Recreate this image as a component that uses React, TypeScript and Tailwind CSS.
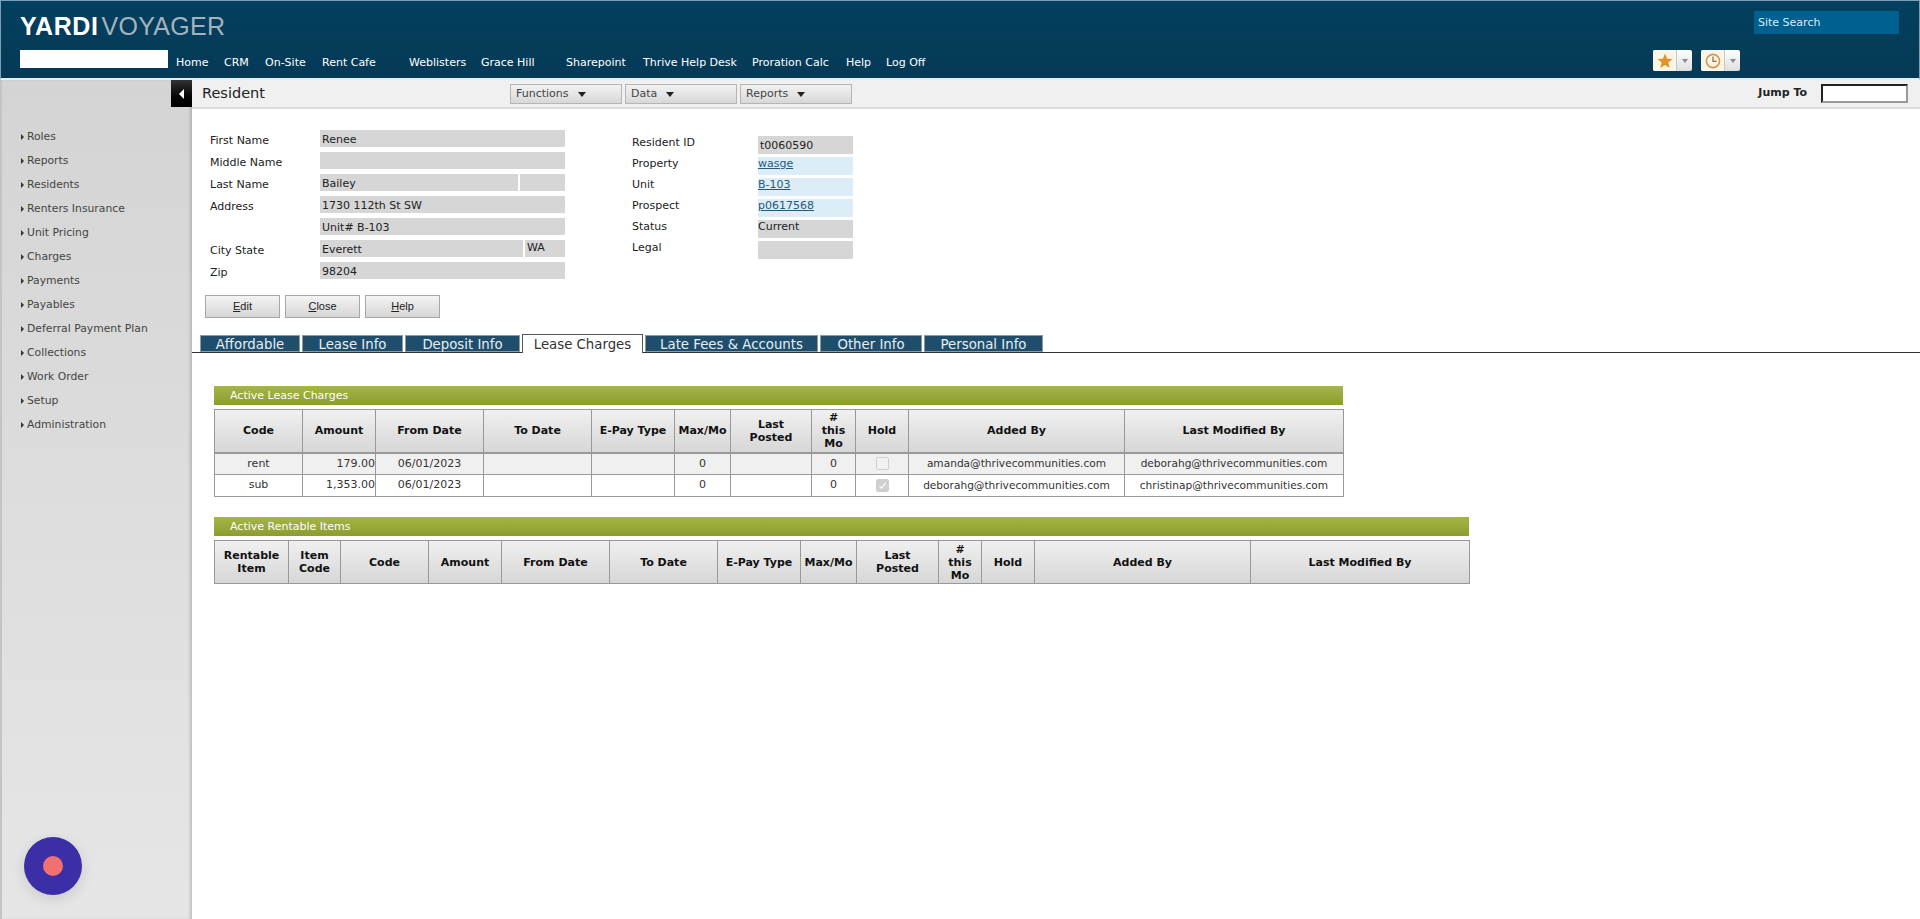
const navLinks = [
  { label: "Home", w: 48 },
  { label: "CRM", w: 41 },
  { label: "On-Site", w: 57 },
  { label: "Rent Cafe", w: 87 },
  { label: "Weblisters", w: 72 },
  { label: "Grace Hill", w: 85 },
  { label: "Sharepoint", w: 77 },
  { label: "Thrive Help Desk", w: 109 },
  { label: "Proration Calc", w: 94 },
  { label: "Help", w: 40 },
  { label: "Log Off", w: 60 },
];

const sideItems = [
  "Roles",
  "Reports",
  "Residents",
  "Renters Insurance",
  "Unit Pricing",
  "Charges",
  "Payments",
  "Payables",
  "Deferral Payment Plan",
  "Collections",
  "Work Order",
  "Setup",
  "Administration",
];

const tabs = [
  { label: "Affordable", w: 100 },
  { label: "Lease Info", w: 101 },
  { label: "Deposit Info", w: 115 },
  { label: "Lease Charges", w: 121, active: true },
  { label: "Late Fees & Accounts", w: 173 },
  { label: "Other Info", w: 102 },
  { label: "Personal Info", w: 119 },
];

const chargeCols = [
  { label: ["Code"], w: 88 },
  { label: ["Amount"], w: 73 },
  { label: ["From Date"], w: 108 },
  { label: ["To Date"], w: 108 },
  { label: ["E-Pay Type"], w: 83 },
  { label: ["Max/Mo"], w: 56 },
  { label: ["Last", "Posted"], w: 81 },
  { label: ["#", "this", "Mo"], w: 44 },
  { label: ["Hold"], w: 53 },
  { label: ["Added By"], w: 216 },
  { label: ["Last Modified By"], w: 219 },
];

const rentableCols = [
  { label: ["Rentable", "Item"], w: 74 },
  { label: ["Item", "Code"], w: 52 },
  { label: ["Code"], w: 88 },
  { label: ["Amount"], w: 73 },
  { label: ["From Date"], w: 108 },
  { label: ["To Date"], w: 108 },
  { label: ["E-Pay Type"], w: 83 },
  { label: ["Max/Mo"], w: 56 },
  { label: ["Last", "Posted"], w: 82 },
  { label: ["#", "this", "Mo"], w: 43 },
  { label: ["Hold"], w: 53 },
  { label: ["Added By"], w: 216 },
  { label: ["Last Modified By"], w: 219 },
];

const charges = [
  { code: "rent", amount: "179.00", from: "06/01/2023", hold: false, added: "amanda@thrivecommunities.com", modified: "deborahg@thrivecommunities.com", shade: true },
  { code: "sub", amount: "1,353.00", from: "06/01/2023", hold: true, added: "deborahg@thrivecommunities.com", modified: "christinap@thrivecommunities.com", shade: false },
];

function Field({ w, value, className = "leading-[19px]" }: { w: number; value?: string; className?: string }) {
  return (
    <div style={{ width: w }} className={`h-[17px] bg-[#d6d6d6] px-[2px] text-[11px] text-[#222] ${className}`}>
      {value}
    </div>
  );
}

function LeftRow({ label, children }: { label?: string; children: React.ReactNode }) {
  return (
    <div className="flex h-[22px]">
      <div className="w-[110px] pt-[2px] text-[11px] leading-[17px] text-[#222]">{label}</div>
      <div className="flex gap-[2px]">{children}</div>
    </div>
  );
}

function RightRow({ label, value, link, className = "leading-[13px]" }: { label: string; value?: string; link?: boolean; className?: string }) {
  return (
    <div className="flex h-[21px]">
      <div className="w-[126px] text-[11px] leading-[14px] text-[#222]">{label}</div>
      <div className={`h-[18px] w-[95px] text-[11px] ${className} ${link ? "bg-[#dcedf8] text-[#23597d] underline" : "bg-[#d6d6d6] text-[#222]"}`}>
        {value}
      </div>
    </div>
  );
}

function MenuButton({ label }: { label: string }) {
  return (
    <div className="flex h-[20px] w-[112px] items-center border border-[#b5b5b5] bg-gradient-to-b from-[#f2f2f2] to-[#d8d8d8] pl-[5px] pt-[1px] text-[11px] text-[#444]">
      {label}
      <span className="ml-[9px] h-0 w-0 border-x-[4px] border-t-[5px] border-x-transparent border-t-[#222]" />
    </div>
  );
}

function ActionButton({ first, rest }: { first: string; rest: string }) {
  return (
    <div className="flex h-[23px] w-[75px] items-center justify-center border border-[#a8a8a8] bg-gradient-to-b from-[#f4f4f4] to-[#d6d6d6] font-['Liberation_Sans',sans-serif] text-[11px] text-[#222]">
      <span className="underline">{first}</span>
      {rest}
    </div>
  );
}

function SectionBar({ title, w }: { title: string; w: number }) {
  return (
    <div
      style={{ width: w }}
      className="h-[19px] bg-gradient-to-b from-[#a6b644] to-[#8d9c30] pl-[16px] text-[11px] leading-[19px] text-white"
    >
      {title}
    </div>
  );
}

function HeaderCells({ cols }: { cols: { label: string[]; w: number }[] }) {
  return (
    <tr className="bg-gradient-to-b from-[#f0f0f0] to-[#d6d6d6]">
      {cols.map((c, i) => (
        <th key={i} className="border border-[#999] p-0 text-center text-[11px] font-bold leading-[13px] text-[#111]">
          {c.label.map((line) => (
            <div key={line}>{line}</div>
          ))}
        </th>
      ))}
    </tr>
  );
}

function Colgroup({ cols }: { cols: { w: number }[] }) {
  return (
    <colgroup>
      {cols.map((c, i) => (
        <col key={i} style={{ width: c.w }} />
      ))}
    </colgroup>
  );
}

function HoldBox({ checked }: { checked: boolean }) {
  return (
    <div className="mx-auto flex h-[13px] w-[13px] items-center justify-center rounded-[2px] border border-[#cfcfcf] bg-[#f2f2f2]">
      {checked && (
        <svg viewBox="0 0 12 12" className="h-[11px] w-[11px]">
          <rect x="0" y="0" width="12" height="12" fill="#cfcfcf" />
          <path d="M2.5 6.5 L5 9 L9.5 3" fill="none" stroke="#f5f5f5" strokeWidth="1.6" />
        </svg>
      )}
    </div>
  );
}

function SmallArrow() {
  return <span className="h-0 w-0 border-y-[3px] border-l-[3px] border-y-transparent border-l-[#333]" />;
}

function IconButton({ children }: { children: React.ReactNode }) {
  return (
    <div className="flex h-[21px] w-[39px] overflow-hidden rounded-[2px] bg-gradient-to-b from-[#ffffff] to-[#dfdfdf]">
      <div className="flex w-[24px] items-center justify-center border-r border-[#c8c8c8] bg-[#fbf5e6]">{children}</div>
      <div className="flex flex-1 items-center justify-center">
        <span className="h-0 w-0 border-x-[3px] border-t-[4px] border-x-transparent border-t-[#7f8c99]" />
      </div>
    </div>
  );
}

export default function App() {
  const tdClass = "border border-[#999] p-0 text-center text-[11px] text-[#333]";
  const emailClass = "border border-[#999] p-0 text-center text-[10.6px] text-[#333]";

  return (
    <div className="relative flex h-screen flex-col overflow-hidden bg-white font-['DejaVu_Sans',sans-serif]">
      {/* Top banner */}
      <div className="flex h-[80px] shrink-0 justify-between border border-b-2 border-[#7d9fb3] border-b-[#e8eef2] bg-gradient-to-b from-[#043f5f] to-[#053a56] px-[19px]">
        <div>
          <div className="mt-[12px] flex h-[26px] items-center font-['Liberation_Sans',sans-serif] text-[25px] leading-none">
            <span className="font-bold tracking-[0.6px] text-white">YARDI</span>
            <span className="ml-[3px] tracking-[0.3px] text-[#a3b3bd]">VOYAGER</span>
          </div>
          <div className="mt-[11px] flex items-start">
            <div className="h-[18px] w-[148px] bg-white" />
            <div className="ml-[8px] flex pt-[5px] text-[11px] text-white">
              {navLinks.map((n) => (
                <div key={n.label} style={{ width: n.w }}>
                  {n.label}
                </div>
              ))}
            </div>
          </div>
        </div>
        <div className="mr-[1px] flex w-[246px] flex-col items-end">
          <div className="mt-[10px] h-[23px] w-[145px] bg-[#00608f] pl-[4px] text-[11px] leading-[23px] text-[#d8ecf5]">
            Site Search
          </div>
          <div className="mt-[16px] mr-[159px] flex gap-[9px]">
            <IconButton>
              <svg viewBox="0 0 16 16" className="h-[16px] w-[16px]">
                <polygon points="8,0.5 10.1,5.7 15.6,6 11.3,9.5 12.8,15 8,11.9 3.2,15 4.7,9.5 0.4,6 5.9,5.7" fill="#e3922a" />
              </svg>
            </IconButton>
            <IconButton>
              <svg viewBox="0 0 16 16" className="h-[16px] w-[16px]" fill="none" stroke="#cf9a4c" strokeWidth="1.6">
                <circle cx="8" cy="8" r="6.6" />
                <path d="M8 3.6 V8.4 H11.6" stroke="#8a7448" strokeWidth="1.3" />
              </svg>
            </IconButton>
          </div>
        </div>
      </div>

      <div className="flex min-h-0 flex-1">
        {/* Left menu */}
        <div className="w-[192px] shrink-0 border-l-[2px] border-[#c4c4c4] bg-gradient-to-b from-[#d4d4d4] to-[#e6e6e6] pt-[45px] pl-[19px] shadow-[inset_-3px_0_3px_-1px_rgba(0,0,0,0.16)]">
          {sideItems.map((item) => (
            <div key={item} className="flex h-[24px] items-center gap-[3px] text-[10.8px] text-[#444]">
              <SmallArrow />
              {item}
            </div>
          ))}
        </div>

        {/* Main */}
        <div className="min-w-0 flex-1">
          <div className="flex h-[29px] items-center justify-between border-b-2 border-[#dcdcdc] bg-[#f0f0f0]">
            <div className="flex items-center">
              <div className="-ml-[21px] flex h-[27px] w-[21px] items-center justify-center bg-gradient-to-b from-[#333] to-black">
                <span className="h-0 w-0 border-y-[5px] border-r-[5px] border-y-transparent border-r-white" />
              </div>
              <div className="ml-[10px] w-[308px] text-[14.5px] text-[#222]">Resident</div>
              <div className="flex gap-[3px]">
                <MenuButton label="Functions" />
                <MenuButton label="Data" />
                <MenuButton label="Reports" />
              </div>
            </div>
            <div className="mr-[12px] flex items-center">
              <span className="text-[11px] font-bold text-[#222]">Jump To</span>
              <div className="ml-[14px] h-[19px] w-[87px] border-2 border-[#222] border-r-[#999] border-b-[#999] bg-white" />
            </div>
          </div>

          {/* Resident details */}
          <div className="mt-[21px] flex pl-[18px]">
            <div className="w-[355px]">
              <LeftRow label="First Name"><Field w={245} value="Renee" className="leading-[20px]" /></LeftRow>
              <LeftRow label="Middle Name"><Field w={245} /></LeftRow>
              <LeftRow label="Last Name">
                <Field w={198} value="Bailey" />
                <Field w={45} />
              </LeftRow>
              <LeftRow label="Address"><Field w={245} value="1730 112th St SW" /></LeftRow>
              <LeftRow><Field w={245} value="Unit# B-103" /></LeftRow>
              <LeftRow label="City State">
                <Field w={203} value="Everett" />
                <Field w={40} value="WA" className="leading-[15px]" />
              </LeftRow>
              <LeftRow label="Zip"><Field w={245} value="98204" /></LeftRow>
            </div>
            <div className="ml-[67px] pt-[6px]">
              <RightRow label="Resident ID" value="t0060590" className="px-[2px] leading-[20px]" />
              <RightRow label="Property" value="wasge" link />
              <RightRow label="Unit" value="B-103" link />
              <RightRow label="Prospect" value="p0617568" link />
              <RightRow label="Status" value="Current" />
              <RightRow label="Legal" />
            </div>
          </div>

          <div className="mt-[11px] flex gap-[5px] pl-[13px]">
            <ActionButton first="E" rest="dit" />
            <ActionButton first="C" rest="lose" />
            <ActionButton first="H" rest="elp" />
          </div>

          {/* Tabs */}
          <div className="mt-[17px] flex h-[18px] items-end gap-[2px] border-b border-[#333] pl-[8px]">
            {tabs.map((t) => (
              <div
                key={t.label}
                style={{ width: t.w }}
                className={
                  t.active
                    ? "-mb-[1px] h-[19px] border border-b-0 border-[#555] bg-white text-center text-[13.3px] leading-[19px] text-[#333]"
                    : "h-[17px] border border-[#8a9aa6] bg-[#1f4e6c] text-center text-[13.3px] leading-[17px] text-[#e6eef3]"
                }
              >
                {t.label}
              </div>
            ))}
          </div>

          {/* Active lease charges */}
          <div className="ml-[22px] mt-[33px]">
            <SectionBar title="Active Lease Charges" w={1129} />
            <table className="mt-[4px] table-fixed border-collapse" style={{ width: 1129 }}>
              <Colgroup cols={chargeCols} />
              <thead className="h-[43px] border-b-2 border-[#999]">
                <HeaderCells cols={chargeCols} />
              </thead>
              <tbody>
                {charges.map((r) => (
                  <tr key={r.code} className={`h-[22px] ${r.shade ? "bg-[#f0f0f0]" : "bg-white"}`}>
                    <td className={tdClass}>{r.code}</td>
                    <td className={`${tdClass} text-right`}>{r.amount}</td>
                    <td className={tdClass}>{r.from}</td>
                    <td className={tdClass} />
                    <td className={tdClass} />
                    <td className={tdClass}>0</td>
                    <td className={tdClass} />
                    <td className={tdClass}>0</td>
                    <td className={tdClass}><HoldBox checked={r.hold} /></td>
                    <td className={emailClass}>{r.added}</td>
                    <td className={emailClass}>{r.modified}</td>
                  </tr>
                ))}
              </tbody>
            </table>
          </div>

          {/* Active rentable items */}
          <div className="ml-[22px] mt-[20px]">
            <SectionBar title="Active Rentable Items" w={1255} />
            <table className="mt-[4px] table-fixed border-collapse" style={{ width: 1255 }}>
              <Colgroup cols={rentableCols} />
              <thead className="h-[43px]">
                <HeaderCells cols={rentableCols} />
              </thead>
            </table>
          </div>
        </div>
      </div>

      {/* Floating widget */}
      <div className="absolute bottom-[24px] left-[24px] flex h-[58px] w-[58px] items-center justify-center rounded-full bg-[#3b2ea6] shadow-[0_4px_14px_rgba(0,0,0,0.12)]">
        <div className="h-[20px] w-[20px] rounded-full bg-[#f2706f]" />
      </div>
    </div>
  );
}
